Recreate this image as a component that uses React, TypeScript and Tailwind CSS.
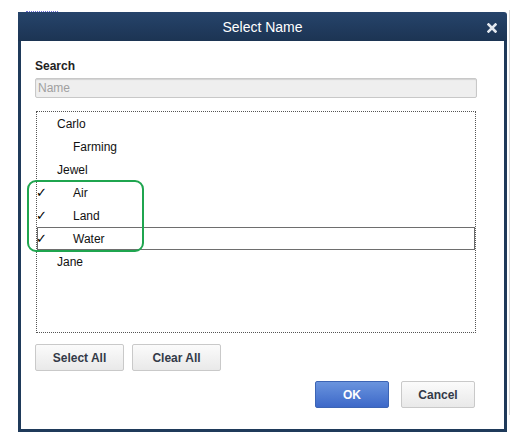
import React from 'react';

type Row = { label: string; indent: boolean; checked: boolean; selected?: boolean };

const rows: Row[] = [
  { label: 'Carlo', indent: false, checked: false },
  { label: 'Farming', indent: true, checked: false },
  { label: 'Jewel', indent: false, checked: false },
  { label: 'Air', indent: true, checked: true },
  { label: 'Land', indent: true, checked: true },
  { label: 'Water', indent: true, checked: true, selected: true },
  { label: 'Jane', indent: false, checked: false },
];

const NameRow: React.FC<{ row: Row }> = ({ row }) => (
  <div
    className={`flex h-[23px] items-center border ${
      row.selected ? 'border-[#6e6e6e]' : 'border-transparent'
    }`}
  >
    <span className="-ml-[2px] w-[21px] text-[13px] leading-none text-black">{row.checked ? '✓' : ''}</span>
    <span className={`text-[12px] text-[#111] ${row.indent ? 'pl-[16px]' : 'pl-0'}`}>{row.label}</span>
  </div>
);

export default function App() {
  return (
    <div
      className="relative h-[445px] w-[526px] bg-white pl-[18px] pt-[12px]"
      style={{ fontFamily: '"Liberation Sans", Arial, sans-serif' }}
    >
      {/* bits of the page behind the dialog */}
      <div className="absolute left-[26px] top-[11px] h-[1px] w-[32px] border-t border-dotted border-[#6b6bd6]" />
      <div className="absolute left-[509px] top-[10px] h-[405px] w-[1px] bg-[#d5d5d5]" />

      <div className="flex h-[420px] w-[489px] flex-col">
        {/* title bar */}
        <div className="relative flex h-[29px] items-center justify-center rounded-tr-[3px] bg-gradient-to-b from-[#26446b] to-[#1c3453] pt-[2px]">
          <span className="text-[14px] text-white">Select Name</span>
          <svg className="absolute right-[10px] top-[11px]" width="10" height="10" viewBox="0 0 10 10">
            <path d="M1.5 1.5 L8.5 8.5 M8.5 1.5 L1.5 8.5" stroke="#e3e8ef" strokeWidth="2.6" strokeLinecap="square" />
          </svg>
        </div>

        {/* body */}
        <div className="flex flex-1 flex-col border-x-[3px] border-b-[3px] border-[#1f3a5a] bg-white px-[14px] pt-[18px]">
          <div className="text-[12px] font-bold leading-[14px] text-[#222]">Search</div>
          <div className="mt-[5px] flex h-[20px] w-[442px] items-center rounded-[2px] border border-[#c8c8c8] bg-[#efefef] px-[2px] shadow-[inset_0_1px_1px_rgba(0,0,0,0.12)]">
            <span className="text-[12px] text-[#a0a0a0]">Name</span>
          </div>

          <div className="relative ml-[1px] mt-[13px] h-[222px] w-[440px] border border-dotted border-[#555]">
            {rows.map((r) => (
              <NameRow key={r.label} row={r} />
            ))}
          </div>

          <div className="mt-[11px] flex gap-[8px]">
            <button className="h-[27px] w-[89px] rounded-[2px] border border-[#c9c9c9] bg-gradient-to-b from-[#fbfbfb] to-[#e9e9e9] text-[12px] font-bold text-[#333a48]">
              Select All
            </button>
            <button className="h-[27px] w-[89px] rounded-[2px] border border-[#c9c9c9] bg-gradient-to-b from-[#fbfbfb] to-[#e9e9e9] text-[12px] font-bold text-[#333a48]">
              Clear All
            </button>
          </div>

          <div className="mt-[10px] flex justify-end gap-[12px] pr-[15px]">
            <button className="h-[27px] w-[74px] rounded-[2px] border border-[#3c64b4] bg-gradient-to-b from-[#6a94de] to-[#3d68c8] text-[12px] font-bold text-white">
              OK
            </button>
            <button className="h-[27px] w-[74px] rounded-[2px] border border-[#c9c9c9] bg-gradient-to-b from-[#fbfbfb] to-[#e9e9e9] text-[12px] font-bold text-[#333a48]">
              Cancel
            </button>
          </div>
        </div>
      </div>

      {/* highlight drawn over the checked rows */}
      <div className="absolute left-[27px] top-[180px] h-[72px] w-[117px] rounded-[9px] border-2 border-[#1fa54f]" />
    </div>
  );
}
